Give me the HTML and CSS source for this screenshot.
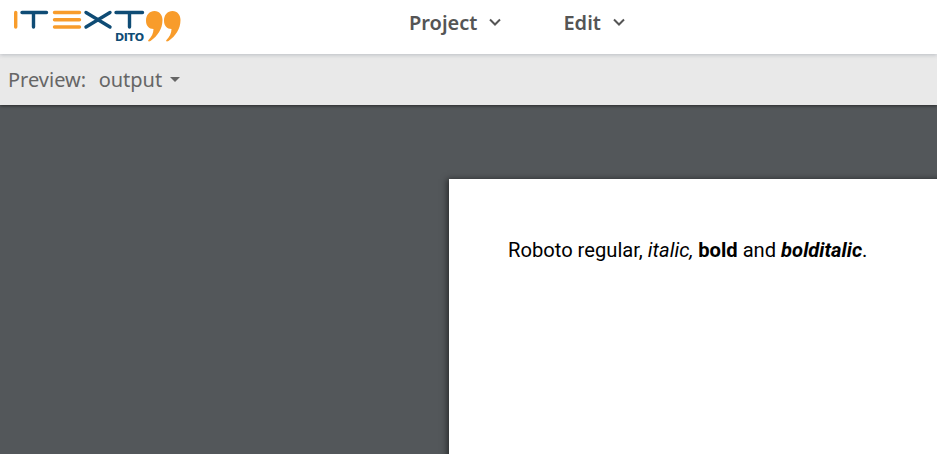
FILE: index.html
```html
<!DOCTYPE html>
<html lang="en">
<head>
<meta charset="utf-8">
<title>iText DITO</title>
<link rel="stylesheet" href="styles.css">
</head>
<body>
<header class="topbar">
  <a class="logo" href="#" aria-label="iText DITO">
    <svg width="170" height="44" viewBox="12 0 170 44">
      <g fill="none" stroke-width="3.4" stroke-linecap="round">
        <path stroke="#f89c2b" d="M15.700 12.500v14.500"/>
        <path stroke="#0f4c75" d="M22 12.500h24.500M33.500 12.500v14.500"/>
        <path stroke="#f89c2b" d="M54.500 12.500h25M54.500 19.700h25M54.500 27h25"/>
        <path stroke="#0f4c75" d="M86 12.500l24 14.500M110 12.500l-24 14.500M116 12.500h26.500M129.500 12.500v14.500"/>
      </g>
      <text class="logo-sub" x="115" y="41" textLength="29">DITO</text>
      <path fill="#f89c2b" d="M154.500 11c5 0 8 4 8 9 0 9-5 16-12 21-2 1-3 0-2-1 3-3 5-7 5-11-4.500 0-7.500-3-7.500-8.500 0-5.500 3.500-9.500 8.500-9.500z"/>
      <path fill="#f89c2b" d="M172.500 11c5 0 8 4 8 9 0 9-5 16-12 21-2 1-3 0-2-1 3-3 5-7 5-11-4.500 0-7.500-3-7.500-8.500 0-5.500 3.500-9.500 8.500-9.500z"/>
    </svg>
  </a>
  <nav class="menu">
    <a class="menu-item" href="#">Project
      <svg class="chev" width="12" height="8" viewBox="0 0 12 8"><path d="M1 1.500l5 5 5-5"/></svg>
    </a>
    <a class="menu-item" href="#">Edit
      <svg class="chev" width="12" height="8" viewBox="0 0 12 8"><path d="M1 1.500l5 5 5-5"/></svg>
    </a>
  </nav>
</header>
<div class="toolbar">
  <span class="label">Preview:</span>
  <span class="select">output<span class="caret"></span></span>
</div>
<main class="stage">
  <article class="sheet">
    <p>Roboto regular, <i>italic,</i> <b>bold</b> and <b><i>bolditalic</i></b>.</p>
  </article>
</main>
</body>
</html>
```
FILE: styles.css
```css
* { box-sizing: border-box; }
html, body { margin: 0; height: 100%; overflow: hidden; }
body { display: flex; flex-direction: column; background: #53575a; font-family: "Noto Sans", sans-serif; }
.topbar { position: relative; z-index: 2; flex: none; height: 54px; background: #fff; display: flex; align-items: flex-start; box-shadow: 0 1px 4px rgba(80,90,110,.3); }
.logo { display: block; margin-left: 12px; height: 44px; }
.logo svg { display: block; }
.logo-sub { font: 700 11px "DejaVu Sans", sans-serif; fill: #0f4c75; }
.menu { position: absolute; left: 409px; top: 0; height: 44px; display: flex; align-items: center; gap: 62px; }
.menu-item { display: flex; align-items: center; gap: 12px; font-family: "Noto Sans", sans-serif; font-size: 20px; font-weight: 600; color: #555; text-decoration: none; }
.chev { fill: none; stroke: #555; stroke-width: 2; }
.toolbar { position: relative; z-index: 1; flex: none; height: 51px; background: #e9e9e9; display: flex; align-items: center; padding: 0 8px 1px; color: #666; font-size: 20px; box-shadow: 0 1px 3px rgba(0,0,0,.5); }
.select { display: flex; align-items: center; margin-left: 12.500px; }
.caret { margin-left: 8px; width: 0; height: 0; border: 5px solid transparent; border-top-color: #666; border-bottom: 0; }
.stage { flex: 1; min-height: 0; padding: 74px 0 0 449px; overflow: hidden; }
.sheet { width: 700px; height: 600px; background: #fff; box-shadow: -2px 0 6px rgba(0,0,0,.5); padding: 59px; }
.sheet p { margin: 0; font: 400 20.160px/24px Roboto, sans-serif; color: #000; white-space: nowrap; }
```
